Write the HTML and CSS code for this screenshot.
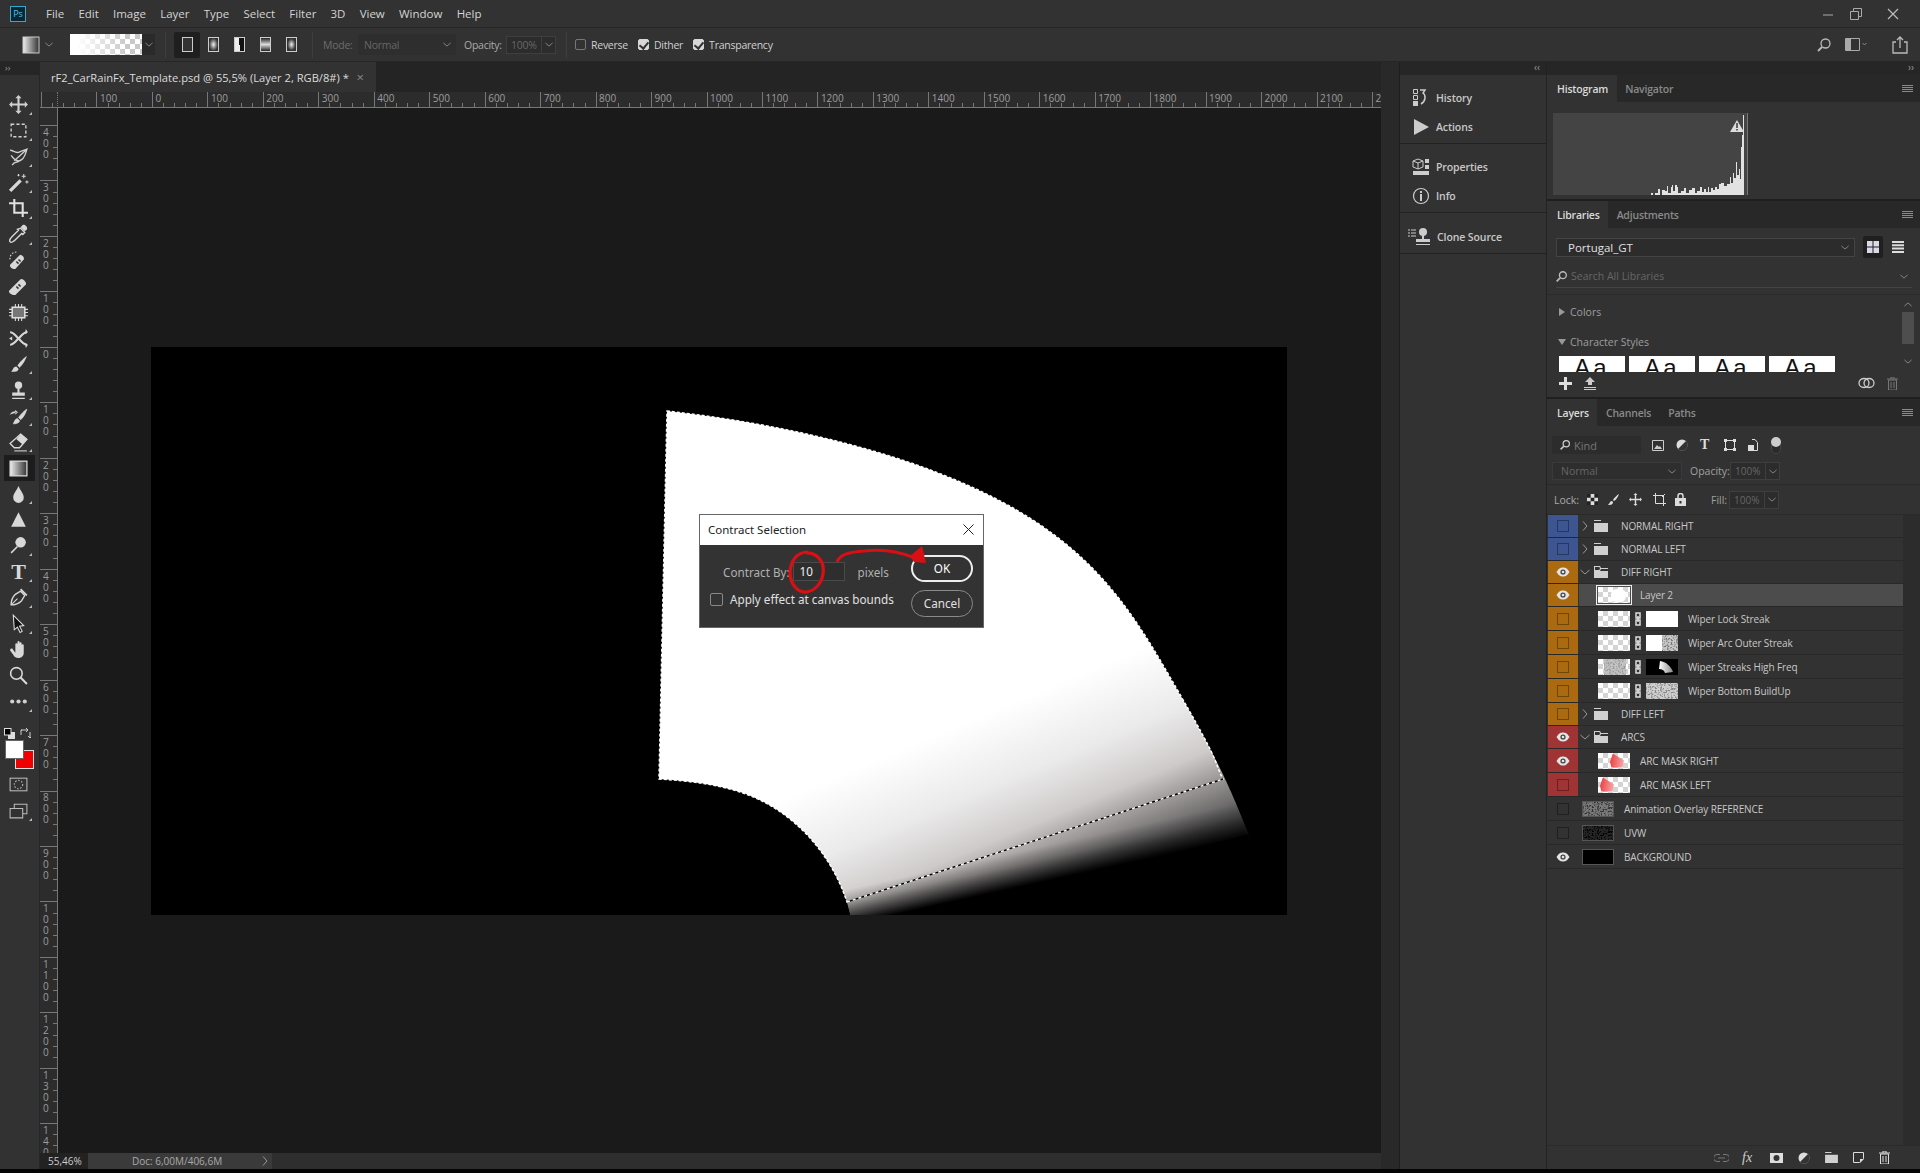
FILE: index.html
```html
<!DOCTYPE html>
<html lang="en">
<head>
    <meta charset="UTF-8">
    <title>Adobe Photoshop</title>
    <link rel="stylesheet" href="styles.css">
</head>
<body>
    <svg class="defs" width="0" height="0">
        <defs>
            <filter id="noise"><feTurbulence type="fractalNoise" baseFrequency="0.55" numOctaves="2" seed="4"/><feColorMatrix values="0 0 0 0 1  0 0 0 0 1  0 0 0 0 1  3 3 3 0 -3.6"/></filter>
            <linearGradient id="fade" gradientUnits="userSpaceOnUse" x1="402.5" y1="958.9" x2="487.6" y2="1161.7">
                <stop offset="0" stop-color="#fff"/>
                <stop offset="0.318" stop-color="#eaeaea"/>
                <stop offset="0.545" stop-color="#cfcaca"/>
                <stop offset="0.686" stop-color="#9a9595"/>
                <stop offset="0.864" stop-color="#555"/>
                <stop offset="1" stop-color="#333"/>
            </linearGradient>
            <linearGradient id="fade-end" gradientUnits="userSpaceOnUse" x1="225.8" y1="1025.9" x2="233.3" y2="1060">
                <stop offset="0" stop-color="#000" stop-opacity="0"/>
                <stop offset="0.37" stop-color="#000" stop-opacity="0.25"/>
                <stop offset="0.77" stop-color="#000" stop-opacity="0.7"/>
                <stop offset="1" stop-color="#000"/>
            </linearGradient>
            <linearGradient id="toolgrad" x1="0" x2="1"><stop offset="0" stop-color="#eee"/><stop offset="1" stop-color="#333"/></linearGradient>
            <linearGradient id="fangrad" x1="0" x2="1"><stop offset="0" stop-color="#fff"/><stop offset="1" stop-color="#888"/></linearGradient>
            <symbol id="eye" viewBox="0 0 14 10"><path d="M0.5 5C3 1 5 .5 7 .5S11 1 13.5 5C11 9 9 9.500 7 9.500S3 9 .5 5z" fill="currentColor"/><circle cx="7" cy="5" r="2.600" fill="#444"/><circle cx="7" cy="5" r="1.300" fill="currentColor"/></symbol>
            <symbol id="link" viewBox="0 0 8 14"><path d="M2 1h4v5H2zM2 8h4v5H2z" fill="none" stroke="#ddd" stroke-width="1.500"/><path d="M4 4v6" stroke="#ddd" stroke-width="1.500"/></symbol>
            <symbol id="folder" viewBox="0 0 14 12"><path d="M0 0h7v1H0zM0 3h14v9H0z" fill="#d0d0d0"/></symbol>
            <symbol id="folder-open" viewBox="0 0 14 12"><path d="M0 0h6l1 2h7v1H7L6 5h8v7H0z" fill="#d0d0d0"/><path d="M1 1h4.500L6 3 5 4H1z" fill="#323232"/></symbol>
            <symbol id="chev-r" viewBox="0 0 6 10"><path d="M1 0.500L5 5 1 9.500" fill="none" stroke="#999"/></symbol>
            <symbol id="chev-d" viewBox="0 0 10 6"><path d="M0.500 1L5 5 9.500 1" fill="none" stroke="#999"/></symbol>
            <symbol id="burger" viewBox="0 0 11 7"><path d="M0 .5h11M0 2.500h11M0 4.500h11M0 6.500h11" stroke="#8a8a8a"/></symbol>
        </defs>
    </svg>

    <header class="menubar">
        <div class="ps-logo">Ps</div>
        <nav class="menu">
            <span>File</span><span>Edit</span><span>Image</span><span>Layer</span><span>Type</span><span>Select</span><span>Filter</span><span>3D</span><span>View</span><span>Window</span><span>Help</span>
        </nav>
        <div class="winctl">
            <svg class="win-min" width="10" height="10" viewBox="0 0 10 10"><path d="M0 6h10" stroke="#aaa"/></svg>
            <svg width="12" height="12" viewBox="0 0 12 12"><path d="M.5 3.500h8v8h-8zM3.500 3V.5h8v8H9" fill="none" stroke="#aaa"/></svg>
            <svg width="12" height="12" viewBox="0 0 12 12"><path d="M1 1l10 10M11 1L1 11" stroke="#bbb" stroke-width="1.200"/></svg>
        </div>
    </header>

    <div class="optionsbar">
        <svg class="opt-grad" width="18" height="18" viewBox="0 0 18 18"><rect x="1" y="1" width="16" height="16" fill="url(#toolgrad)" stroke="#ccc"/></svg>
        <svg class="opt-chev" width="8" height="5"><use href="#chev-d"/></svg>
        <div class="grad-preview"><div class="grad-swatch"></div><div class="grad-chev"><svg width="8" height="5"><use href="#chev-d"/></svg></div></div>
        <div class="opt-sep"></div>
        <div class="grad-types">
            <div class="grad-type active"><i class="gt gt-linear"></i></div>
            <div class="grad-type"><i class="gt gt-radial"></i></div>
            <div class="grad-type"><i class="gt gt-angle"></i></div>
            <div class="grad-type"><i class="gt gt-reflect"></i></div>
            <div class="grad-type"><i class="gt gt-diamond"></i></div>
        </div>
        <div class="opt-sep"></div>
        <span class="opt-label dim mode-label">Mode:</span>
        <div class="opt-select">Normal<svg width="8" height="5"><use href="#chev-d"/></svg></div>
        <span class="opt-label opacity-label">Opacity:</span>
        <div class="opt-num"><span>100%</span><b><svg width="8" height="5"><use href="#chev-d"/></svg></b></div>
        <div class="opt-sep"></div>
        <label class="opt-check"><i class="cb"></i>Reverse</label>
        <label class="opt-check"><i class="cb on"></i>Dither</label>
        <label class="opt-check"><i class="cb on"></i>Transparency</label>
        <div class="opt-right">
            <svg width="16" height="16" viewBox="0 0 16 16"><circle cx="9.500" cy="6.500" r="4.500" fill="none" stroke="#bbb" stroke-width="1.300"/><path d="M6 10l-4 4" stroke="#bbb" stroke-width="1.800"/></svg>
            <svg class="ws-ico" width="22" height="14" viewBox="0 0 22 14"><path d="M.5 .5h14v12H.5z" fill="none" stroke="#aaa"/><path d="M1 1h5v11H1z" fill="#aaa"/><path d="M17.500 5l2 2 2-2" fill="none" stroke="#888"/></svg>
            <svg width="16" height="18" viewBox="0 0 16 18"><path d="M4 6H1v11h14V6h-3M8 12V1M5 4l3-3 3 3" fill="none" stroke="#bbb" stroke-width="1.300"/></svg>
        </div>
    </div>

    <div class="main">
        <aside class="toolbar">
            <div class="tool-head">&#8250;&#8250;</div>
            <div class="tool more"><svg viewBox="0 0 20 20"><path d="M10 1l3 3h-2v5h5V7l3 3-3 3v-2h-5v5h2l-3 3-3-3h2v-5H4v2l-3-3 3-3v2h5V4H7z" fill="#d0d0d0"/></svg></div>
            <div class="tool more"><svg viewBox="0 0 20 20"><rect x="3" y="4" width="14" height="12" fill="none" stroke="#d0d0d0" stroke-width="1.300" stroke-dasharray="3 2"/></svg></div>
            <div class="tool more"><svg viewBox="0 0 20 20"><path d="M2 4c3 0 5 3 8 2s5-2 8-3c-1 4-2 8-5 10s-7 3-7 3M3 9c2 3 4 5 7 5M6 16l-2 2M18 3L6 14" fill="none" stroke="#d0d0d0" stroke-width="1.300"/></svg></div>
            <div class="tool more"><svg viewBox="0 0 20 20"><path d="M2 18L12 8" stroke="#d8d8d8" stroke-width="3.200"/><path d="M15 2v4M13 4h4M18 8v3M16.500 9.500h3M10 2v2M9 3h2" stroke="#d8d8d8"/></svg></div>
            <div class="tool more"><svg viewBox="0 0 20 20"><path d="M6 1v13h13M1 5h13v13" fill="none" stroke="#e0e0e0" stroke-width="2"/></svg></div>
            <div class="tool more"><svg viewBox="0 0 20 20"><path d="M12 4l4 4-2 2-1-1-6 6c-2 2-4 3-5 2s0-3 2-5l6-6-1-1z" fill="none" stroke="#d8d8d8" stroke-width="1.300"/><path d="M12 3l2-2c2-1 5 2 4 4l-2 2z" fill="#d8d8d8"/></svg></div>
            <div class="tool"><svg viewBox="0 0 20 20"><path d="M2 14L11 5c2-1 5 2 4 4l-8 9c-2 1-6-2-5-4z" fill="#d8d8d8"/><path d="M8 11l2 2M10 9l2 2" stroke="#333" stroke-width="1.500"/><path d="M2 9a6 6 0 0 1 6-7" fill="none" stroke="#ddd" stroke-dasharray="1.500 1.500"/></svg></div>
            <div class="tool"><svg viewBox="0 0 20 20"><path d="M1 14L12 3c2-1 6 3 5 5L7 18c-2 1-7-2-6-4z" fill="#d8d8d8"/><path d="M8 10l2 2M10 8l2 2" stroke="#333" stroke-width="1.500"/></svg></div>
            <div class="tool"><svg viewBox="0 0 20 20"><rect x="4" y="5" width="12" height="10" fill="#777" stroke="#ddd" stroke-width="1.500"/><path d="M1 7h3M1 10h3M1 13h3M16 7h3M16 10h3M16 13h3M7 2v3M10 2v3M13 2v3M7 15v3M10 15v3M13 15v3" stroke="#ddd"/></svg></div>
            <div class="tool"><svg viewBox="0 0 20 20"><path d="M2 4c3 0 4 2 8 6s5 6 8 6M2 16c3 0 4-2 8-6s5-6 8-6" fill="none" stroke="#d8d8d8" stroke-width="2"/><path d="M17 1l2 3-3 2zM17 19l2-3-3-2zM1 10l3-2 0 4z" fill="#d8d8d8"/></svg></div>
            <div class="tool more"><svg viewBox="0 0 20 20"><path d="M18 2c-2 1-7 6-9 9l2 2c3-2 6-8 7-11zM8 12c-3 0-3 3-5 5 3 0 7 0 7-3z" fill="#d8d8d8"/></svg></div>
            <div class="tool more"><svg viewBox="0 0 20 20"><circle cx="10" cy="5" r="3.500" fill="#d8d8d8"/><path d="M9 8h2v4h5v3H4v-3h5zM4 17h12v1H4z" fill="#d8d8d8"/></svg></div>
            <div class="tool more"><svg viewBox="0 0 20 20"><path d="M18 3c-2 1-6 5-8 8l2 2c3-2 5-7 6-10zM9 12c-2 0-3 3-4 5 3 0 6-1 6-3zM2 8c2-3 5-3 7-2M7 8L9 6 7 4" fill="#d8d8d8" stroke="#d8d8d8" stroke-width=".6"/></svg></div>
            <div class="tool more"><svg viewBox="0 0 20 20"><path d="M12 2l6 5-7 8H6l-4-4z" fill="none" stroke="#d8d8d8" stroke-width="1.300"/><path d="M12 2l6 5-4 5-6-5z" fill="#d8d8d8"/><path d="M6 18h12" stroke="#d8d8d8"/></svg></div>
            <div class="tool selected"><svg viewBox="0 0 20 20"><rect x="2" y="3" width="16" height="14" fill="url(#toolgrad)" stroke="#ddd" stroke-width="1.200"/></svg></div>
            <div class="tool more"><svg viewBox="0 0 20 20"><path d="M10 2c2 5 5 7 5 11a5 5 0 0 1-10 0c0-4 3-6 5-11z" fill="#d8d8d8"/></svg></div>
            <div class="tool"><svg viewBox="0 0 20 20"><path d="M10 3l7 14H3z" fill="#d8d8d8"/></svg></div>
            <div class="tool more"><svg viewBox="0 0 20 20"><circle cx="12" cy="7" r="5" fill="#d8d8d8"/><path d="M9 11l-6 6" stroke="#d8d8d8" stroke-width="1.500"/></svg></div>
            <div class="tool more"><span class="type-t">T</span></div>
            <div class="tool more"><svg viewBox="0 0 20 20"><path d="M3 17c0-4 2-8 4-10l5-3 4 4-3 5c-2 2-6 4-10 4z" fill="none" stroke="#d8d8d8" stroke-width="1.300"/><path d="M3 17l6-6" stroke="#d8d8d8"/><path d="M12 2l6 6" stroke="#d8d8d8" stroke-width="1.500"/></svg></div>
            <div class="tool more"><svg viewBox="0 0 20 20"><path d="M5 2l10 10-4 .5 2.500 5-2 1-2.500-5L6 16z" fill="#111" stroke="#ddd"/></svg></div>
            <div class="tool"><svg viewBox="0 0 20 20"><path d="M4 9l3 4V5a1 1 0 0 1 2 0V3a1 1 0 0 1 2 0v1a1 1 0 0 1 2 0v2a1 1 0 0 1 2 0v7c0 3-2 5-5 5-3 0-4-1-5-3L2 11c0-2 1-2 2-2z" fill="#d8d8d8"/></svg></div>
            <div class="tool"><svg viewBox="0 0 20 20"><circle cx="8" cy="8" r="5.500" fill="none" stroke="#d8d8d8" stroke-width="1.500"/><path d="M12 12l6 6" stroke="#d8d8d8" stroke-width="2"/></svg></div>
            <div class="tool more"><svg viewBox="0 0 20 20"><circle cx="4" cy="10" r="2" fill="#d0d0d0"/><circle cx="10" cy="10" r="2" fill="#d0d0d0"/><circle cx="16" cy="10" r="2" fill="#d0d0d0"/></svg></div>
            <div class="swatch-tools">
                <svg width="11" height="11" viewBox="0 0 11 11"><rect x="4" y="4" width="7" height="7" fill="#ddd"/><rect x=".5" y=".5" width="6.500" height="6.500" fill="#000" stroke="#ddd"/></svg>
                <svg width="11" height="11" viewBox="0 0 11 11"><path d="M1 7V2h7M6 0L8 2 6 4M10 4v6M8 8l2 2 2-2M1 2h1" fill="none" stroke="#ccc"/></svg>
            </div>
            <div class="swatches"><i class="swatch-bg"></i><i class="swatch-fg"></i></div>
            <div class="tool small"><svg viewBox="0 0 20 20"><rect x="2" y="4" width="16" height="12" fill="none" stroke="#bbb"/><circle cx="10" cy="10" r="4" fill="none" stroke="#bbb" stroke-dasharray="1.500 1.500"/></svg></div>
            <div class="tool small more"><svg viewBox="0 0 20 20"><path d="M2 8h12v9H2z" fill="none" stroke="#bbb"/><path d="M6 8V4h12v9h-4" fill="none" stroke="#bbb"/></svg></div>
        </aside>

        <section class="docarea">
            <div class="tabrow">
                <div class="doctab"><span>rF2_CarRainFx_Template.psd @ 55,5% (Layer 2, RGB/8#) *</span><b>&#215;</b></div>
            </div>
            <div class="ruler-h">
                <div class="ruler-corner"></div>
                <div class="ruler-h-scale">
                    <span></span><span>100</span><span>0</span><span>100</span><span>200</span><span>300</span><span>400</span><span>500</span><span>600</span><span>700</span><span>800</span><span>900</span><span>1000</span><span>1100</span><span>1200</span><span>1300</span><span>1400</span><span>1500</span><span>1600</span><span>1700</span><span>1800</span><span>1900</span><span>2000</span><span>2100</span><span>2200</span>
                </div>
            </div>
            <div class="work">
                <div class="ruler-v">
                    <span>400</span><span>300</span><span>200</span><span>100</span><span>0</span><span>100</span><span>200</span><span>300</span><span>400</span><span>500</span><span>600</span><span>700</span><span>800</span><span>900</span><span>1000</span><span>1100</span><span>1200</span><span>1300</span><span>1400</span>
                </div>
                <div class="workspace">
                    <div class="doc">
                        <svg class="art" width="1136" height="568" viewBox="151 347 1136 568">
                            <rect x="151" y="347" width="1136" height="568" fill="#000"/>
                            <path d="M667 411C790 425 920 455 1013 508S1140 625 1182 698S1235 800 1249 836L856 936L847 902C830 850 790 808 740 792C715 784 690 781 659 779Z" fill="url(#fade)"/>
                            <path d="M667 411C790 425 920 455 1013 508S1140 625 1182 698S1235 800 1249 836L856 936L847 902C830 850 790 808 740 792C715 784 690 781 659 779Z" fill="url(#fade-end)"/>
                            <path d="M1249 836L856 936" stroke="#000" stroke-width="3"/>
                            <path d="M667 411C790 425 920 455 1013 508S1140 625 1182 698S1213 760 1223 779L847 902C830 850 790 808 740 792C715 784 690 781 659 779Z" fill="none" stroke="#fff" stroke-width="1.500" stroke-dasharray="3 2"/>
                            <path d="M847 902L1223 779" stroke="#000" stroke-width="1.500"/>
                            <path d="M847 902L1223 779" stroke="#fff" stroke-width="1.500" stroke-dasharray="3 3"/>
                        </svg>
                        <div class="dialog">
                            <div class="dialog-title"><span>Contract Selection</span>
                                <svg width="11" height="11" viewBox="0 0 11 11"><path d="M.5 .5l10 10M10.500 .5l-10 10" stroke="#222"/></svg>
                            </div>
                            <div class="dialog-body">
                                <div class="dialog-fields">
                                    <div class="field-row"><span>Contract By:</span><div class="field-input">10</div><span class="unit">pixels</span></div>
                                    <label class="check-row"><i class="dlg-cb"></i>Apply effect at canvas bounds</label>
                                </div>
                                <div class="dialog-btns">
                                    <div class="btn primary">OK</div>
                                    <div class="btn">Cancel</div>
                                </div>
                            </div>
                            <svg class="scribble" width="285" height="114" viewBox="699 514 285 114">
                                <path d="M808 552C796 552 790 562 790 574C791 586 799 593 807 592C818 590 825 578 823 566C821 558 814 552 806 553" fill="none" stroke="#d90f14" stroke-width="3.200"/>
                                <path d="M837 562C840 554 850 552 864 551C880 549 896 550 915 558" fill="none" stroke="#d90f14" stroke-width="3"/>
                                <path d="M910 556L922 546L926 563L914 562Z" fill="#d90f14"/>
                            </svg>
                        </div>
                    </div>
                </div>
            </div>
            <div class="status">
                <div class="status-zoom">55,46%</div>
                <div class="status-doc"><span>Doc: 6,00M/406,6M</span><svg width="6" height="10"><use href="#chev-r"/></svg></div>
            </div>
        </section>

        <div class="gutter"></div>

        <aside class="icondock">
            <div class="dock-strip"><span>&#8249;&#8249;</span></div>
            <div class="icon-group">
                <div class="icon-item"><svg viewBox="0 0 20 20"><path d="M2.500 1.500h4v4h-4zM2.500 7.500h4v4h-4z" fill="none" stroke="#ccc"/><path d="M2 13h5v5H2z" fill="#ccc"/><path d="M9 2h5l-2 3c3 2 3 8-2 11" fill="none" stroke="#ccc" stroke-width="1.500"/></svg><span>History</span></div>
                <div class="icon-item"><svg viewBox="0 0 20 20"><path d="M3 2l15 8-15 8z" fill="#ccc"/></svg><span>Actions</span></div>
            </div>
            <div class="icon-group">
                <div class="icon-item"><svg viewBox="0 0 20 20"><path d="M2 4l5-2 5 2v6l-5 2-5-2z" fill="none" stroke="#ccc"/><path d="M7 6v6M2 4l5 2 5-2" stroke="#ccc" fill="none"/><path d="M14 2h4v4h-4zM14 8h4v4h-4zM2 14h16v4H2z" fill="#ccc"/></svg><span>Properties</span></div>
                <div class="icon-item"><svg viewBox="0 0 20 20"><circle cx="10" cy="10" r="7.500" fill="none" stroke="#ccc" stroke-width="1.200"/><path d="M9 8h2v7H9zM9 5h2v2H9z" fill="#ccc"/></svg><span>Info</span></div>
            </div>
            <div class="icon-group last">
                <div class="icon-item clone"><svg viewBox="0 0 26 20"><path d="M1 3h2M1 6h2M1 9h2M4 3h5M4 6h5M4 9h5" stroke="#ccc"/><circle cx="16" cy="5" r="4" fill="#ccc"/><path d="M15 8h2v4h6v3H9v-3h6zM9 17h14v1H9z" fill="#ccc"/></svg><span>Clone Source</span></div>
            </div>
        </aside>

        <aside class="dock">
            <div class="dock-strip right"><span>&#8250;&#8250;</span></div>

            <section class="panel hist-panel">
                <div class="tabs"><div class="tab active">Histogram</div><div class="tab">Navigator</div><svg class="burger" width="11" height="7"><use href="#burger"/></svg></div>
                <div class="hist-box">
                    <svg width="195" height="82" viewBox="0 0 195 82">
                        <path d="M98 82V80h2v2h2v-2h3v-4h2v6h2v-5h3v1h2v-5h1v7h3v-6h1v-2h1v6h2v-6h2v2h1v6h3v-2h3v-3h2v5h3v-3h3v-2h3v5h2v-2h3v-4h2v5h2v-3h2v3h2v-5h1v5h2v-4h2v2h2v-3h2v2h2v-5h2v-1h3v3h3v-2h3v-7h1v6h2v-10h1v5h2v-16h1v13h2V56h1v10h1V34h1V22h1V2h1V82z" fill="#e2e2e2"/>
                        <path d="M184 7l7 12h-14z" fill="#ddd"/><path d="M183.200 10h1.600v5h-1.600zM183.200 16h1.600v1.500h-1.600z" fill="#444"/>
                    </svg>
                </div>
            </section>

            <section class="panel lib-panel">
                <div class="tabs"><div class="tab active">Libraries</div><div class="tab">Adjustments</div><svg class="burger" width="11" height="7"><use href="#burger"/></svg></div>
                <div class="lib-head">
                    <div class="lib-select"><span>Portugal_GT</span><svg width="8" height="5"><use href="#chev-d"/></svg></div>
                    <div class="view-btn active"><svg width="12" height="12" viewBox="0 0 12 12"><path d="M0 0h5.500v5.500H0zM6.500 0H12v5.500H6.500zM0 6.500h5.500V12H0zM6.500 6.500H12V12H6.500z" fill="#dcd8e8"/></svg></div>
                    <div class="view-btn list"><svg width="12" height="12" viewBox="0 0 12 12"><path d="M0 0h12v2H0zM0 3.300h12v2H0zM0 6.600h12v2H0zM0 10h12v2H0z" fill="#ddd"/></svg></div>
                </div>
                <div class="lib-search">
                    <svg width="11" height="11" viewBox="0 0 16 16"><circle cx="10" cy="6" r="5" fill="none" stroke="#bbb" stroke-width="2"/><path d="M6 10l-5 5" stroke="#bbb" stroke-width="2.500"/></svg>
                    <span>Search All Libraries</span>
                    <svg class="lib-search-chev" width="8" height="5"><use href="#chev-d"/></svg>
                </div>
                <div class="lib-body">
                    <div class="lib-list">
                        <div class="lib-group"><i class="tri-r"></i>Colors</div>
                        <div class="lib-group styles"><i class="tri-d"></i>Character Styles</div>
                        <div class="lib-thumbs">
                            <div class="char-thumb"><span>Aa</span></div>
                            <div class="char-thumb"><span>Aa</span></div>
                            <div class="char-thumb"><span>Aa</span></div>
                            <div class="char-thumb"><span>Aa</span></div>
                        </div>
                    </div>
                    <div class="lib-scroll">
                        <svg width="8" height="5" class="flip"><use href="#chev-d"/></svg>
                        <div class="lib-thumb"></div>
                        <svg width="8" height="5"><use href="#chev-d"/></svg>
                    </div>
                </div>
                <div class="lib-foot">
                    <svg width="13" height="13" viewBox="0 0 13 13"><path d="M5 0h3v5h5v3H8v5H5V8H0V5h5z" fill="#ddd"/></svg>
                    <svg class="lib-up" width="12" height="13" viewBox="0 0 12 13"><path d="M6 0l5 5H8v3H4V5H1zM0 10h12v1H0zM0 12h12v1H0z" fill="#ccc"/></svg>
                    <svg class="lib-cc" width="17" height="12" viewBox="0 0 17 12"><ellipse cx="6" cy="6" rx="5" ry="4.500" fill="none" stroke="#ccc" stroke-width="1.300"/><ellipse cx="11" cy="6" rx="5" ry="4.500" fill="none" stroke="#ccc" stroke-width="1.300"/></svg>
                    <svg width="11" height="13" viewBox="0 0 11 13"><path d="M0 2h11M4 2V0h3v2M1.500 3h8v10h-8zM4 5v6M7 5v6" fill="none" stroke="#777"/></svg>
                </div>
            </section>

            <section class="panel layers-panel">
                <div class="tabs"><div class="tab active">Layers</div><div class="tab">Channels</div><div class="tab">Paths</div><svg class="burger" width="11" height="7"><use href="#burger"/></svg></div>

                <div class="layer-tools filter-row">
                    <div class="kind"><svg width="10" height="10" viewBox="0 0 16 16"><circle cx="10" cy="6" r="5" fill="none" stroke="#ccc" stroke-width="2"/><path d="M6 10l-5 5" stroke="#ccc" stroke-width="2.500"/></svg><span>Kind</span></div>
                    <svg class="fi" width="12" height="11" viewBox="0 0 12 11"><path d="M.5 .5h11v10H.5z" fill="none" stroke="#ccc"/><path d="M2 9l3-4 2 2 1-1 2 3z" fill="#ccc"/></svg>
                    <svg class="fi" width="12" height="12" viewBox="0 0 12 12"><circle cx="6" cy="6" r="5.500" fill="#ddd"/><path d="M10 2A5.500 5.500 0 0 1 2 10z" fill="#333"/></svg>
                    <span class="fi fi-t">T</span>
                    <svg class="fi" width="12" height="12" viewBox="0 0 12 12"><path d="M1.500 1.500h9v9h-9z" fill="none" stroke="#ddd"/><path d="M0 0h3v3H0zM9 0h3v3H9zM0 9h3v3H0zM9 9h3v3H9z" fill="#ddd"/></svg>
                    <svg class="fi" width="10" height="12" viewBox="0 0 10 12"><path d="M4 .5h3l2.500 3v8H5" fill="none" stroke="#ddd"/><path d="M0 6h6v6H0z" fill="#ddd"/></svg>
                    <div class="toggle"><i></i></div>
                </div>

                <div class="layer-tools blend-row">
                    <div class="blend"><span>Normal</span><svg width="8" height="5"><use href="#chev-d"/></svg></div>
                    <span class="lt-label">Opacity:</span>
                    <div class="opt-num lt-num"><span>100%</span><b><svg width="8" height="5"><use href="#chev-d"/></svg></b></div>
                </div>

                <div class="layer-tools lock-row">
                    <span class="lock-label">Lock:</span>
                    <svg class="li" width="11" height="11" viewBox="0 0 12 12"><path d="M0 0h12v12H0z" fill="#ddd"/><path d="M0 0h4v4H0zM8 0h4v4H8zM4 4h4v4H4zM0 8h4v4H0zM8 8h4v4H8z" fill="#222"/></svg>
                    <svg class="li" width="13" height="13" viewBox="0 0 13 13"><path d="M12 1C10 2 7 5 6 7l1 1c2-1 4-4 5-7zM5 8c-2 0-2 2-4 4 2 0 5 0 5-3z" fill="#ddd"/></svg>
                    <svg class="li" width="13" height="13" viewBox="0 0 13 13"><path d="M6.500 0l2 2H7.200v3.800H11V4.500l2 2-2 2V7.200H7.200V11h1.300l-2 2-2-2h1.300V7.200H2v1.300l-2-2 2-2v1.300h3.800V2H4.500z" fill="#ddd"/></svg>
                    <svg class="li crop-li" width="13" height="13" viewBox="0 0 13 13"><path d="M2.500 0v10.500H13M0 2.500h10.500V13" fill="none" stroke="#ddd"/><path d="M12 1l-3 3" stroke="#ddd"/></svg>
                    <svg class="li" width="11" height="13" viewBox="0 0 11 13"><path d="M0 5h11v8H0z" fill="#ddd"/><path d="M3 5V3a2.500 2.500 0 0 1 5 0v2" fill="none" stroke="#ddd" stroke-width="1.500"/><rect x="4.500" y="8" width="2" height="2.500" fill="#333"/></svg>
                    <span class="lt-label fill-label">Fill:</span>
                    <div class="opt-num lt-num"><span>100%</span><b><svg width="8" height="5"><use href="#chev-d"/></svg></b></div>
                </div>

                <div class="layers-wrap">
                    <div class="layers">
                        <div class="layer row-folder"><div class="vis blue"><i class="vbox"></i></div><div class="info"><svg class="chev" width="6" height="10"><use href="#chev-r"/></svg><svg class="fold" width="14" height="12"><use href="#folder"/></svg><span>NORMAL RIGHT</span></div></div>
                        <div class="layer row-folder"><div class="vis blue"><i class="vbox"></i></div><div class="info"><svg class="chev" width="6" height="10"><use href="#chev-r"/></svg><svg class="fold" width="14" height="12"><use href="#folder"/></svg><span>NORMAL LEFT</span></div></div>
                        <div class="layer row-folder"><div class="vis orange"><svg width="14" height="10"><use href="#eye"/></svg></div><div class="info"><svg class="chev" width="10" height="6"><use href="#chev-d"/></svg><svg class="fold" width="14" height="12"><use href="#folder-open"/></svg><span>DIFF RIGHT</span></div></div>
                        <div class="layer row-child selected"><div class="vis orange"><svg width="14" height="10"><use href="#eye"/></svg></div><div class="info"><div class="thumb checker framed"><i class="blob"></i></div><span>Layer 2</span></div></div>
                        <div class="layer row-child"><div class="vis orange"><i class="vbox"></i></div><div class="info"><div class="thumb checker"></div><svg class="lnk" width="8" height="14"><use href="#link"/></svg><div class="thumb white"></div><span>Wiper Lock Streak</span></div></div>
                        <div class="layer row-child"><div class="vis orange"><i class="vbox"></i></div><div class="info"><div class="thumb checker"></div><svg class="lnk" width="8" height="14"><use href="#link"/></svg><div class="thumb white half-noise"><svg width="16" height="16"><rect width="16" height="16" fill="#777"/><rect width="16" height="16" filter="url(#noise)" opacity=".6"/></svg></div><span>Wiper Arc Outer Streak</span></div></div>
                        <div class="layer row-child"><div class="vis orange"><i class="vbox"></i></div><div class="info"><div class="thumb checker half-gray"><svg width="22" height="16"><rect width="22" height="16" fill="#999"/><rect width="22" height="16" filter="url(#noise)" opacity=".4"/></svg></div><svg class="lnk" width="8" height="14"><use href="#link"/></svg><div class="thumb black"><svg width="32" height="16"><path d="M14 2C20 3 25 7 27 13L19 14C18 11 16 10 13 10Z" fill="url(#fangrad)"/></svg></div><span>Wiper Streaks High Freq</span></div></div>
                        <div class="layer row-child"><div class="vis orange"><i class="vbox"></i></div><div class="info"><div class="thumb checker"></div><svg class="lnk" width="8" height="14"><use href="#link"/></svg><div class="thumb noise"><svg width="32" height="16"><rect width="32" height="16" fill="#888"/><rect width="32" height="16" filter="url(#noise)" opacity=".6"/></svg></div><span>Wiper Bottom BuildUp</span></div></div>
                        <div class="layer row-folder"><div class="vis orange"><i class="vbox"></i></div><div class="info"><svg class="chev" width="6" height="10"><use href="#chev-r"/></svg><svg class="fold" width="14" height="12"><use href="#folder"/></svg><span>DIFF LEFT</span></div></div>
                        <div class="layer row-folder"><div class="vis red"><svg width="14" height="10"><use href="#eye"/></svg></div><div class="info"><svg class="chev" width="10" height="6"><use href="#chev-d"/></svg><svg class="fold" width="14" height="12"><use href="#folder-open"/></svg><span>ARCS</span></div></div>
                        <div class="layer row-child"><div class="vis red"><svg width="14" height="10"><use href="#eye"/></svg></div><div class="info"><div class="thumb checker"><i class="red-blob right"></i></div><span>ARC MASK RIGHT</span></div></div>
                        <div class="layer row-child"><div class="vis red"><i class="vbox"></i></div><div class="info"><div class="thumb checker"><i class="red-blob left"></i></div><span>ARC MASK LEFT</span></div></div>
                        <div class="layer row-root"><div class="vis"><i class="vbox"></i></div><div class="info"><div class="thumb noise dark"><svg width="32" height="16"><rect width="32" height="16" fill="#333"/><rect width="32" height="16" filter="url(#noise)" opacity=".35"/></svg></div><span>Animation Overlay REFERENCE</span></div></div>
                        <div class="layer row-root"><div class="vis"><i class="vbox"></i></div><div class="info"><div class="thumb noise dark"><svg width="32" height="16"><rect width="32" height="16" fill="#000"/><rect width="32" height="16" filter="url(#noise)" opacity=".15"/></svg></div><span>UVW</span></div></div>
                        <div class="layer row-root"><div class="vis"><svg width="14" height="10"><use href="#eye"/></svg></div><div class="info"><div class="thumb black framed-thin"></div><span>BACKGROUND</span></div></div>
                    </div>
                    <div class="layers-scroll"></div>
                </div>

                <div class="layers-foot">
                    <svg class="foot-link" width="15" height="8" viewBox="0 0 15 8"><path d="M6 .5H3a3.500 3.500 0 0 0 0 7h3M9 .5h3a3.500 3.500 0 0 1 0 7H9M4 4h7" fill="none" stroke="#777"/></svg>
                    <span class="fx">fx</span>
                    <svg width="13" height="10" viewBox="0 0 13 10"><path d="M0 0h13v10H0z" fill="#ddd"/><circle cx="6.500" cy="5" r="3" fill="#333"/></svg>
                    <svg width="12" height="12" viewBox="0 0 12 12"><circle cx="6" cy="6" r="5.500" fill="#ddd"/><path d="M10 2A5.500 5.500 0 0 1 2 10z" fill="#333"/></svg>
                    <svg width="13" height="11" viewBox="0 0 14 12"><use href="#folder"/></svg>
                    <svg width="11" height="11" viewBox="0 0 11 11"><path d="M.5 .5h10v6l-4 4h-6z" fill="none" stroke="#ddd"/><path d="M7 7h4l-4 4z" fill="#ddd"/></svg>
                    <svg width="11" height="13" viewBox="0 0 11 13"><path d="M0 2h11M4 2V0h3v2M1.500 3h8v10h-8zM4 5v6M7 5v6" fill="none" stroke="#ddd"/></svg>
                </div>
            </section>
        </aside>
    </div>
</body>
</html>
```

FILE: styles.css
```css
* {
    box-sizing: border-box;
}

html, body {
    margin: 0;
    height: 1173px;
    overflow: hidden;
}

body {
    display: flex;
    flex-direction: column;
    background: #050505;
    color: #c8c8c8;
    font-family: "Open Sans", "Noto Sans", sans-serif;
    font-size: 11px;
}

.defs {
    position: absolute;
}

svg {
    display: block;
    flex-shrink: 0;
}

/* top bars */
.menubar {
    height: 28px;
    display: flex;
    align-items: center;
    padding-left: 10px;
    background: #323232;
    border-bottom: 1px solid #262626;
}

.ps-logo {
    width: 16px;
    height: 16px;
    border: 1px solid #31a8d0;
    background: #0b2533;
    color: #5cc3e4;
    font-size: 9px;
    line-height: 14px;
    text-align: center;
}

.menu {
    display: flex;
    gap: 14.2px;
    margin-left: 20px;
    font-size: 11.5px;
    color: #d4d4d4;
}

.winctl {
    margin-left: auto;
    display: flex;
    align-items: center;
    gap: 25px;
    padding-right: 21px;
}

.win-min {
    margin-right: -8px;
}

.optionsbar {
    height: 34px;
    display: flex;
    align-items: center;
    padding-left: 22px;
    background: #323232;
    border-bottom: 1px solid #262626;
    font-size: 10.5px;
    letter-spacing: -0.25px;
}

.opt-chev {
    margin-left: 5px;
}

.grad-preview {
    display: flex;
    width: 85px;
    height: 21px;
    margin-left: 17px;
    background: #2a2a2a;
}

.grad-swatch {
    width: 72px;
    background:
        linear-gradient(90deg, #fff 10%, rgba(255, 255, 255, 0) 80%),
        repeating-conic-gradient(#c8c8c8 0 25%, #fff 0 50%) 0 0 / 10px 10px;
}

.grad-chev {
    flex: 1;
    display: flex;
    align-items: center;
    justify-content: center;
}

.opt-sep {
    width: 1px;
    height: 26px;
    background: #3e3e3e;
    margin: 0 10px;
}

.grad-types {
    display: flex;
    margin-left: -2px;
    margin-right: -2px;
}

.grad-type {
    width: 26px;
    height: 26px;
    display: flex;
    align-items: center;
    justify-content: center;
}

.grad-type.active {
    background: #1f1f1f;
    border-radius: 2px;
}

.gt {
    width: 11px;
    height: 15px;
    border: 1px solid #ccc;
    background: #444;
}

.gt-linear { background: #333; }
.gt-radial { background: radial-gradient(#eee, #333 70%); }
.gt-angle { background: conic-gradient(#111 0 50%, #eee 50% 100%); }
.gt-reflect { background: linear-gradient(#222, #ddd 50%, #222); }
.gt-diamond { background: radial-gradient(#eee, #333 65%); }

.opt-label {
    color: #aaa;
}

.opt-label.dim {
    color: #6c6c6c;
}

.mode-label {
    margin-left: 0;
    width: 35px;
}

.opt-select {
    width: 98px;
    height: 21px;
    display: flex;
    align-items: center;
    justify-content: space-between;
    padding: 0 5px 0 6px;
    background: #2e2e2e;
    color: #666;
}

.opacity-label {
    margin-left: 8px;
    width: 42px;
}

.opt-num {
    width: 50px;
    height: 18px;
    display: flex;
    border: 1px solid #3e3e3e;
    background: #2c2c2c;
    color: #666;
    line-height: 16px;
}

.opt-num span {
    flex: 1;
    padding-left: 4px;
}

.opt-num b {
    width: 14px;
    display: flex;
    align-items: center;
    justify-content: center;
    border-left: 1px solid #3e3e3e;
}

.opt-check {
    display: flex;
    align-items: center;
    gap: 5px;
    margin-right: 10px;
    color: #d0d0d0;
}

.opt-check:first-of-type {
    margin-left: -2px;
}

.cb {
    position: relative;
    width: 11px;
    height: 11px;
    border: 1px solid #777;
    border-radius: 2px;
}

.cb.on {
    background: #d8d8d8;
    border-color: #d8d8d8;
}

.cb.on::after {
    content: "";
    position: absolute;
    left: 2px;
    top: 0;
    width: 4px;
    height: 7px;
    border-right: 2px solid #333;
    border-bottom: 2px solid #333;
    transform: rotate(40deg);
}

.opt-right {
    margin-left: auto;
    display: flex;
    align-items: center;
    gap: 13px;
    padding-right: 12px;
}

.ws-ico {
    margin-right: 12px;
}

/* main row */
.main {
    height: 1107px;
    display: flex;
}

.toolbar {
    width: 40px;
    padding-top: 0;
    background: #323232;
    border-right: 1px solid #262626;
}

.tool-head {
    height: 30px;
    padding-left: 5px;
    font-size: 9px;
    line-height: 11px;
    color: #999;
    background: linear-gradient(#262626 13px, #323232 13px);
}

.tool {
    position: relative;
    height: 25.95px;
    display: flex;
    align-items: center;
    padding-left: 8px;
}

.tool svg {
    width: 21px;
    height: 21px;
}

.tool.selected {
    margin: 0 4px;
    padding-left: 4px;
    background: #1c1c1c;
}

.tool.more::after {
    content: "";
    position: absolute;
    right: 7px;
    bottom: 3px;
    border-left: 3px solid transparent;
    border-bottom: 3px solid #bbb;
}

.type-t {
    width: 21px;
    text-align: center;
    font-family: "Liberation Serif", serif;
    font-weight: bold;
    font-size: 22px;
    color: #d8d8d8;
}

.swatch-tools {
    display: flex;
    justify-content: space-between;
    padding: 13px 8px 0 4px;
}

.swatches {
    position: relative;
    height: 32px;
    margin-top: 1px;
}

.swatch-fg, .swatch-bg {
    position: absolute;
    width: 19px;
    height: 19px;
    border: 1px solid #ddd;
}

.swatch-fg {
    left: 5px;
    top: 0;
    background: #fff;
    border-color: #666;
}

.swatch-bg {
    left: 15px;
    top: 10px;
    background: #f00000;
}

.tool.small {
    height: 26px;
}

/* document area */
.docarea {
    width: 1341px;
    display: flex;
    flex-direction: column;
    background: #2a2a2a;
}

.tabrow {
    height: 30px;
    background: #242424;
}

.doctab {
    width: 336px;
    height: 30px;
    display: flex;
    align-items: center;
    justify-content: space-between;
    padding: 0 12px 0 11px;
    background: #323232;
    font-size: 11.15px;
    color: #dcdcdc;
}

.doctab b {
    font-weight: normal;
    font-size: 13px;
    color: #888;
}

.ruler-h {
    height: 16px;
    display: flex;
    background: #2c2c2c;
}

.ruler-corner {
    width: 18px;
    border-right: 1px dotted #777;
    border-bottom: 1px dotted #777;
}

.ruler-h-scale {
    flex: 1;
    display: flex;
    overflow: hidden;
    border-bottom: 1px solid #777;
    margin-left: -18px;
    background:
        repeating-linear-gradient(90deg, #777 0 1px, transparent 1px 11.092px) 0.6px 100% / 100% 4px no-repeat,
        repeating-linear-gradient(90deg, #777 0 1px, transparent 1px 55.46px) 0.6px 0 / 100% 100% no-repeat;
}

.ruler-h-scale span {
    flex: 0 0 55.46px;
    padding-left: 4px;
    font-size: 10px;
    line-height: 12px;
    color: #9c9c9c;
    white-space: nowrap;
}

.ruler-h-scale span:first-child {
    flex-basis: 56px;
}

.work {
    height: 1045px;
    display: flex;
}

.ruler-v {
    width: 18px;
    flex-shrink: 0;
    height: 1045px;
    padding-top: 17px;
    overflow: hidden;
    display: flex;
    flex-direction: column;
    background:
        repeating-linear-gradient(180deg, #777 0 1px, transparent 1px 11.092px) 100% 17.2px / 4px 100% no-repeat,
        repeating-linear-gradient(180deg, #777 0 1px, transparent 1px 55.46px) 0 17.2px / 100% 100% no-repeat,
        #2c2c2c;
    border-right: 1px solid #777;
}

.ruler-v span {
    flex: 0 0 55.46px;
    width: 8px;
    margin-left: 3px;
    padding-top: 2px;
    font-size: 10px;
    line-height: 11px;
    color: #9c9c9c;
    word-break: break-all;
}

.workspace {
    flex: 1;
    padding: 239px 0 0 93px;
    background: #1a1a1a;
}

.doc {
    position: relative;
    width: 1136px;
    height: 568px;
}

.dialog {
    position: absolute;
    left: 548px;
    top: 167px;
    width: 285px;
    height: 114px;
    border: 1px solid #666;
    background: #333;
    font-family: "Noto Sans", sans-serif;
}

.dialog-title {
    height: 30px;
    display: flex;
    align-items: center;
    justify-content: space-between;
    padding: 0 9px 2px 8px;
    background: #fff;
    color: #222;
    font-size: 11.5px;
}

.dialog-body {
    display: flex;
    justify-content: space-between;
    padding: 10px 10px 0 10px;
    font-size: 11.7px;
}

.dialog-fields {
    padding-top: 7px;
}

.field-row {
    display: flex;
    align-items: center;
    gap: 3px;
    padding-left: 13px;
    height: 19px;
    color: #b0b0b0;
}

.field-row .unit {
    margin-left: 10px;
}

.field-input {
    width: 52px;
    height: 19px;
    padding-left: 6px;
    border: 1px solid #4a4a4a;
    color: #eee;
    background: #2e2e2e;
    line-height: 17px;
}

.check-row {
    display: flex;
    align-items: center;
    gap: 7px;
    margin-top: 10px;
    color: #e0e0e0;
}

.dlg-cb {
    width: 13px;
    height: 13px;
    border: 1px solid #888;
    border-radius: 2px;
}

.dialog-btns {
    display: flex;
    flex-direction: column;
    gap: 8px;
}

.btn {
    width: 62px;
    height: 27px;
    border: 1px solid #8a8a8a;
    border-radius: 14px;
    text-align: center;
    line-height: 25px;
    color: #e0e0e0;
}

.btn.primary {
    border: 2px solid #eee;
    line-height: 23px;
    color: #fff;
}

.scribble {
    position: absolute;
    left: -1px;
    top: -1px;
    pointer-events: none;
}

.status {
    height: 16px;
    display: flex;
    background: #2e2e2e;
    font-size: 10px;
    line-height: 16px;
}

.status-zoom {
    width: 48px;
    padding-left: 8px;
    background: #222;
    color: #ccc;
}

.status-doc {
    width: 184px;
    display: flex;
    align-items: center;
    justify-content: space-between;
    padding: 0 4px 0 44px;
    background: #3a3a3a;
    color: #aaa;
}

.gutter {
    width: 19px;
    background: #292929;
    border-right: 1px solid #1e1e1e;
}

/* collapsed icon dock */
.icondock {
    width: 147px;
    background: #323232;
    border-right: 1px solid #222;
}

.dock-strip {
    height: 13px;
    display: flex;
    justify-content: flex-end;
    padding-right: 6px;
    background: #262626;
    font-size: 10px;
    line-height: 11px;
    color: #999;
}

.icon-group {
    padding-top: 9px;
    height: 69px;
    border-bottom: 1px solid #222;
}

.icon-group.last {
    height: 41px;
    padding-top: 10px;
}

.icon-item {
    height: 28.5px;
    display: flex;
    align-items: center;
    gap: 5px;
    padding-left: 11px;
    font-weight: 600;
    font-size: 10.5px;
    letter-spacing: -0.1px;
    color: #c8c8c8;
}

.icon-item svg {
    width: 20px;
    height: 20px;
}

.icon-item.clone {
    padding-left: 7px;
    gap: 4px;
}

.icon-item.clone svg {
    width: 26px;
}

/* docked panels */
.dock {
    width: 373px;
    display: flex;
    flex-direction: column;
    background: #1f1f1f;
}

.panel {
    background: #323232;
}

.hist-panel {
    height: 124px;
}

.lib-panel {
    height: 196px;
    margin-top: 2px;
}

.layers-panel {
    flex: 1;
    margin-top: 2px;
    display: flex;
    flex-direction: column;
}

.tabs {
    height: 27px;
    display: flex;
    align-items: stretch;
    position: relative;
    background: #282828;
    font-weight: 600;
    font-size: 10.5px;
    letter-spacing: -0.2px;
}

.tab {
    display: flex;
    align-items: center;
    padding: 0 8.5px;
    color: #8a8a8a;
}

.tab.active {
    padding-left: 10px;
    background: #323232;
    color: #dadada;
}

.burger {
    position: absolute;
    right: 7px;
    top: 10px;
}

.hist-box {
    width: 195px;
    height: 82px;
    margin: 11px 0 0 6px;
    background: #444;
    border-right: 1px solid #777;
}

.lib-head {
    display: flex;
    align-items: center;
    gap: 8px;
    padding: 8px 0 0 9px;
}

.lib-select {
    width: 299px;
    height: 19px;
    display: flex;
    align-items: center;
    justify-content: space-between;
    padding: 0 5px 0 11px;
    border: 1px solid #444;
    background: #2c2c2c;
    color: #e0e0e0;
    font-size: 11.5px;
}

.view-btn {
    width: 20px;
    height: 22px;
    display: flex;
    align-items: center;
    justify-content: center;
}

.view-btn.list {
    margin-left: -3px;
}

.view-btn.active {
    background: #1f1f1f;
    border-radius: 2px;
}

.lib-search {
    position: relative;
    height: 25px;
    margin: 5px 8px 0 9px;
    padding-top: 2px;
    display: flex;
    align-items: center;
    gap: 4px;
    border-bottom: 1px solid #444;
    color: #666;
    font-size: 10.5px;
}

.lib-search-chev {
    margin-left: auto;
    margin-right: 4px;
}

.lib-body {
    height: 76px;
    margin-top: 6px;
    display: flex;
    border-top: 1px solid #2a2a2a;
}

.lib-list {
    flex: 1;
    padding: 10px 0 0 12px;
}

.lib-group {
    display: flex;
    align-items: center;
    gap: 4px;
    height: 14px;
    color: #9e9e9e;
    font-size: 10.5px;
}

.lib-group.styles {
    margin-top: 16px;
}

.tri-r {
    border-left: 6px solid #999;
    border-top: 4px solid transparent;
    border-bottom: 4px solid transparent;
    margin-right: 1px;
}

.tri-d {
    border-top: 6px solid #999;
    border-left: 4px solid transparent;
    border-right: 4px solid transparent;
    margin-left: -1px;
}

.lib-thumbs {
    display: flex;
    gap: 4px;
    margin-top: 7px;
}

.char-thumb {
    width: 66px;
    height: 16px;
    overflow: hidden;
    background: #fff;
    color: #111;
    text-align: center;
    font-family: "Liberation Sans", sans-serif;
    font-size: 24px;
    letter-spacing: 3px;
    line-height: 24px;
}

.lib-scroll {
    width: 16px;
    margin-right: 4px;
    display: flex;
    flex-direction: column;
    align-items: center;
    padding-top: 7px;
}

.lib-scroll .flip {
    transform: rotate(180deg);
}

.lib-thumb {
    width: 12px;
    height: 32px;
    margin: 5px 0 15px;
    background: #4e4e4e;
}

.lib-foot {
    height: 26px;
    display: flex;
    align-items: center;
    gap: 12px;
    padding: 0 22px 0 12px;
}

.lib-cc {
    margin-left: auto;
}

.layer-tools {
    display: flex;
    align-items: center;
    padding-left: 5px;
}

.filter-row {
    height: 32px;
    padding-top: 6px;
}

.kind {
    width: 89px;
    height: 18px;
    display: flex;
    align-items: center;
    gap: 4px;
    padding-left: 8px;
    background: #2c2c2c;
    color: #777;
}

.fi {
    margin-left: 12px;
}

.filter-row .kind + .fi {
    margin-left: 11px;
}

.fi-t {
    font-family: "Liberation Serif", serif;
    font-weight: bold;
    font-size: 14px;
    color: #ddd;
    width: 12px;
}

.toggle {
    position: relative;
    width: 10px;
    height: 17px;
    margin-left: 13px;
    border: 1px solid #444;
    border-radius: 5px;
    background: #2a2a2a;
}

.toggle i {
    position: absolute;
    left: -1px;
    top: -1px;
    width: 10px;
    height: 10px;
    border-radius: 50%;
    background: #ccc;
}

.blend-row {
    height: 27px;
    border-bottom: 1px solid #2a2a2a;
}

.blend {
    width: 130px;
    height: 18px;
    display: flex;
    align-items: center;
    justify-content: space-between;
    padding: 0 5px 0 8px;
    background: #2e2e2e;
    border: 1px solid #3a3a3a;
    color: #666;
    font-size: 10.5px;
}

.lt-label {
    width: 48px;
    padding-left: 8px;
    color: #a0a0a0;
    font-size: 10.5px;
}

.lt-num {
    font-size: 10px;
}

.lock-row {
    height: 30px;
    border-bottom: 1px solid #2a2a2a;
}

.lock-label {
    width: 35px;
    padding-left: 2px;
    color: #aaa;
    font-size: 10.5px;
}

.li {
    margin-right: 9px;
}

.crop-li {
    margin-left: 2px;
}

.fill-label {
    width: 18px;
    padding-left: 0;
    margin-left: 16px;
}

.layers-wrap {
    flex: 1;
    display: flex;
}

.layers {
    width: 356px;
}

.layers-scroll {
    flex: 1;
    background: #2c2c2c;
}

.layer {
    display: flex;
    border-bottom: 1px solid #282828;
    font-size: 10px;
    letter-spacing: -0.12px;
    color: #c8c8c8;
}

.row-folder { height: 23px; }
.row-child, .row-root { height: 24px; }
.row-child.selected { height: 23px; }

.vis {
    width: 30px;
    margin-left: 1px;
    margin-right: 1px;
    display: flex;
    align-items: center;
    justify-content: center;
    color: #e4e4e4;
}

.vbox {
    width: 12px;
    height: 12px;
    border: 1px solid rgba(0, 0, 0, 0.35);
}

.blue { background: #3d5691; }
.orange { background: #ab6a10; }
.red { background: #a03434; }

.info {
    flex: 1;
    display: flex;
    align-items: center;
}

.layer.selected .info {
    background: #4c4c4c;
}

.row-folder .info {
    padding-left: 1px;
}

.chev {
    width: 10px;
}

.fold {
    margin: 0 13px 0 4px;
}

.row-child .info {
    padding-left: 19px;
}

.row-root .info {
    padding-left: 3px;
}

.thumb {
    position: relative;
    width: 32px;
    height: 16px;
    overflow: hidden;
    margin-right: 10px;
    background: #fff;
}

.checker {
    background: repeating-conic-gradient(#d4d4d4 0 25%, #fff 0 50%) 0 0 / 10px 10px;
}

.checker:has(+ .lnk) {
    margin-right: 4px;
}

.thumb.framed {
    overflow: visible;
    outline: 1px solid #eee;
    outline-offset: 1px;
}

.blob {
    position: absolute;
    left: 13px;
    top: 2px;
    width: 15px;
    height: 13px;
    background: #fff;
    border-radius: 40%;
}

.lnk {
    margin-right: 4px;
}

.half-noise, .half-gray {
    display: flex;
    justify-content: flex-end;
}

.half-gray {
    justify-content: flex-start;
}

.half-gray svg {
    margin-left: 6px;
}

.black {
    background: #000;
}

.framed-thin, .noise.dark {
    border: 1px solid #555;
}

.red-blob {
    position: absolute;
    width: 14px;
    height: 14px;
    top: 1px;
    background: linear-gradient(100deg, #e8383a, #f8b0b0);
    clip-path: polygon(20% 0, 100% 50%, 90% 100%, 10% 100%, 0 60%);
}

.red-blob.right {
    left: 12px;
}

.red-blob.left {
    left: 2px;
}

.layers-foot {
    height: 24px;
    margin-top: auto;
    display: flex;
    align-items: center;
    justify-content: flex-end;
    gap: 15px;
    padding-right: 30px;
    background: #323232;
    border-top: 1px solid #2a2a2a;
}

.foot-link {
    margin-right: -2px;
}

.fx {
    width: 13px;
    font-family: "Liberation Serif", serif;
    font-style: italic;
    font-size: 14px;
    color: #ccc;
}
```
